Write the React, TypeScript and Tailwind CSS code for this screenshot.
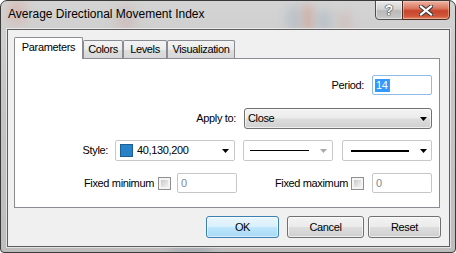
import React from "react";

function Arrow({ color = "#000" }: { color?: string }) {
  return (
    <svg width="7" height="4" viewBox="0 0 7 4" className="block">
      <path d="M0 0h7L3.5 4z" fill={color} />
    </svg>
  );
}

function Checkbox() {
  return (
    <div className="w-[13px] h-[13px] border border-[#8e8f8f] bg-[#f4f4f4] p-[2px]">
      <div className="w-full h-full bg-[linear-gradient(135deg,#c9c9c9_0%,#e2e2e2_60%,#f2f2f2_100%)]" />
    </div>
  );
}

function DisabledInput() {
  return (
    <div className="w-[60px] h-[20px] border border-[#c4c6c9] rounded-[2px] bg-white flex items-center pl-[3px] text-[#7d8795]">
      0
    </div>
  );
}

const grayBtn =
  "border border-[#707070] rounded-[3px] bg-[linear-gradient(180deg,#f3f3f3_0%,#ebebeb_48%,#dddddd_52%,#cfcfcf_100%)] shadow-[inset_0_0_0_1px_rgba(255,255,255,0.65)]";

const tabBg =
  "border border-b-0 border-[#898c95] rounded-t-[2px] bg-[linear-gradient(180deg,#f3f3f3_0%,#ebebeb_50%,#dedede_52%,#d8d8d8_100%)] flex justify-center pt-[2px]";

export default function App() {
  return (
    <div className="w-[456px] h-[253px] bg-white">
      <div className="relative w-[456px] h-[253px] flex flex-col rounded-t-[7px] rounded-b-[4px] border border-[#3a3a3a] overflow-hidden bg-[linear-gradient(180deg,#d4d4d4_0%,#c6c6c6_35%,#bdbdbd_100%)] font-['Liberation_Sans',Arial,sans-serif] text-[11px] leading-[13px] tracking-[-0.35px] text-black">
        {/* blurred glass background */}
        <div className="pointer-events-none absolute left-[8px] top-[0px] w-[16px] h-[22px] bg-[#d9a9a0] blur-[6px] opacity-60" />
        <div className="pointer-events-none absolute left-[118px] top-[6px] w-[14px] h-[24px] bg-[#c79a94] blur-[7px] opacity-40" />
        <div className="pointer-events-none absolute left-[288px] top-[6px] w-[10px] h-[24px] bg-[#7f98b2] blur-[6px] opacity-40" />
        <div className="pointer-events-none absolute left-[303px] top-[4px] w-[8px] h-[26px] bg-[#cf7a60] blur-[5px] opacity-45" />
        <div className="pointer-events-none absolute left-[318px] top-[10px] w-[10px] h-[20px] bg-[#7f98b2] blur-[6px] opacity-40" />
        <div className="pointer-events-none absolute left-[340px] top-[12px] w-[8px] h-[18px] bg-[#c88a7a] blur-[6px] opacity-35" />
        <div className="pointer-events-none absolute left-[170px] top-[244px] w-[40px] h-[10px] bg-[#7f8ea0] blur-[5px] opacity-35" />

        {/* title bar */}
        <div className="relative h-[28px] flex items-start">
          <div className="pl-[7px] pt-[5px] text-[12px] leading-[16px] tracking-normal text-black">
            Average Directional Movement Index
          </div>
          <div className="ml-auto mr-[5px] -mt-px flex">
            <div className="w-[28px] h-[20px] border border-[#4d4d4d] rounded-bl-[4px] bg-[linear-gradient(180deg,#eaeaea_0%,#d2d2d2_45%,#b9b9b9_55%,#c8c8c8_100%)] shadow-[inset_0_0_0_1px_rgba(255,255,255,0.5)] flex items-center justify-center text-[14px] font-bold tracking-normal text-white [text-shadow:0_0_1px_#222,0_0_1px_#222,0_0_1px_#222]">
              ?
            </div>
            <div className="w-[48px] h-[20px] -ml-px border border-[#4a2a22] rounded-br-[4px] bg-[linear-gradient(180deg,#eeb4a4_0%,#dc7a62_40%,#c8452c_55%,#d0583c_85%,#e48a64_100%)] shadow-[inset_0_0_0_1px_rgba(255,220,200,0.45)] flex items-center justify-center">
              <svg width="14" height="11" viewBox="0 0 14 11">
                <path d="M2 1.5L12 9.5M12 1.5L2 9.5" stroke="#3a3a3a" strokeWidth="4.2" strokeLinecap="square" />
                <path d="M2 1.5L12 9.5M12 1.5L2 9.5" stroke="#ffffff" strokeWidth="2.2" strokeLinecap="square" />
              </svg>
            </div>
          </div>
        </div>

        {/* client area */}
        <div className="relative ml-[6px] mr-[5px] mb-[5px] flex-1 flex flex-col border border-[#5e5e5e] bg-[#f0f0f0] pt-[7px] pl-[6px] pr-[8px] pb-[8px] shadow-[0_0_0_1px_rgba(255,255,255,0.55)]">
          {/* tabs */}
          <div className="relative z-10 flex items-end h-[21px]">
            <div className="w-[69px] h-[22px] -mb-px bg-white border border-b-0 border-[#898c95] rounded-t-[2px] flex justify-center pt-[3px]">
              Parameters
            </div>
            <div className={`w-[40px] h-[18px] ${tabBg}`}>Colors</div>
            <div className={`w-[44px] h-[18px] ${tabBg}`}>Levels</div>
            <div className={`w-[68px] h-[18px] ${tabBg}`}>Visualization</div>
          </div>

          {/* panel */}
          <div className="h-[150px] mr-[1px] border border-[#898c95] bg-white flex flex-col pr-[7px]">
            {/* Period */}
            <div className="mt-[16px] h-[20px] flex justify-end items-center gap-[8px]">
              <span>Period:</span>
              <div className="w-[60px] h-[20px] border border-[#8fbbe6] rounded-[2px] bg-white flex items-center pl-[2px]">
                <span className="bg-[#3399ff] text-white px-[1px] leading-[13px]">14</span>
                <span className="w-px h-[13px] bg-[#e8731c]" />
              </div>
            </div>
            {/* Apply to */}
            <div className="mt-[13px] h-[21px] flex justify-end items-center gap-[8px]">
              <span>Apply to:</span>
              <div className={`w-[188px] h-[21px] ${grayBtn} flex items-center pl-[3px] pr-[4px]`}>
                <span className="flex-1">Close</span>
                <Arrow />
              </div>
            </div>
            {/* Style */}
            <div className="mt-[11px] h-[21px] flex justify-end items-center">
              <span className="mr-[7px]">Style:</span>
              <div className="w-[120px] h-[21px] border border-[#c6c8cc] rounded-[2px] bg-white flex items-center pl-[4px] pr-[5px]">
                <div className="w-[13px] h-[13px] bg-[#2882c8] border border-[#1d5f95]" />
                <span className="ml-[4px] flex-1">40,130,200</span>
                <Arrow />
              </div>
              <div className="ml-[8px] w-[90px] h-[21px] border border-[#c6c8cc] rounded-[2px] bg-white flex items-center pl-[6px] pr-[5px]">
                <div className="w-[59px] h-px bg-black" />
                <div className="ml-auto">
                  <Arrow color="#a9a9a9" />
                </div>
              </div>
              <div className="ml-[9px] w-[90px] h-[21px] border border-[#c6c8cc] rounded-[2px] bg-white flex items-center pl-[8px] pr-[4px]">
                <div className="w-[58px] h-[2px] bg-black" />
                <div className="ml-auto">
                  <Arrow />
                </div>
              </div>
            </div>
            {/* Fixed min / max */}
            <div className="mt-[12px] h-[20px] flex items-center">
              <div className="flex-1 flex justify-end items-center">
                <span>Fixed minimum</span>
                <div className="ml-[4px]">
                  <Checkbox />
                </div>
                <div className="ml-[6px]">
                  <DisabledInput />
                </div>
              </div>
              <div className="w-[195px] flex justify-end items-center">
                <span>Fixed maximum</span>
                <div className="ml-[3px]">
                  <Checkbox />
                </div>
                <div className="ml-[8px]">
                  <DisabledInput />
                </div>
              </div>
            </div>
          </div>

          {/* dialog buttons */}
          <div className="mt-[8px] h-[22px] flex justify-end">
            <div className="w-[73px] h-[22px] border border-[#3c7fb1] rounded-[3px] bg-[linear-gradient(180deg,#eaf6fd_0%,#d9f0fc_48%,#bee6fd_52%,#a7d9f5_100%)] shadow-[inset_0_0_0_1px_rgba(255,255,255,0.55)] flex items-center justify-center">
              OK
            </div>
            <div className={`ml-[8px] w-[77px] h-[22px] ${grayBtn} flex items-center justify-center`}>
              Cancel
            </div>
            <div className={`ml-[4px] w-[73px] h-[22px] ${grayBtn} flex items-center justify-center`}>
              Reset
            </div>
          </div>
        </div>
      </div>
    </div>
  );
}
